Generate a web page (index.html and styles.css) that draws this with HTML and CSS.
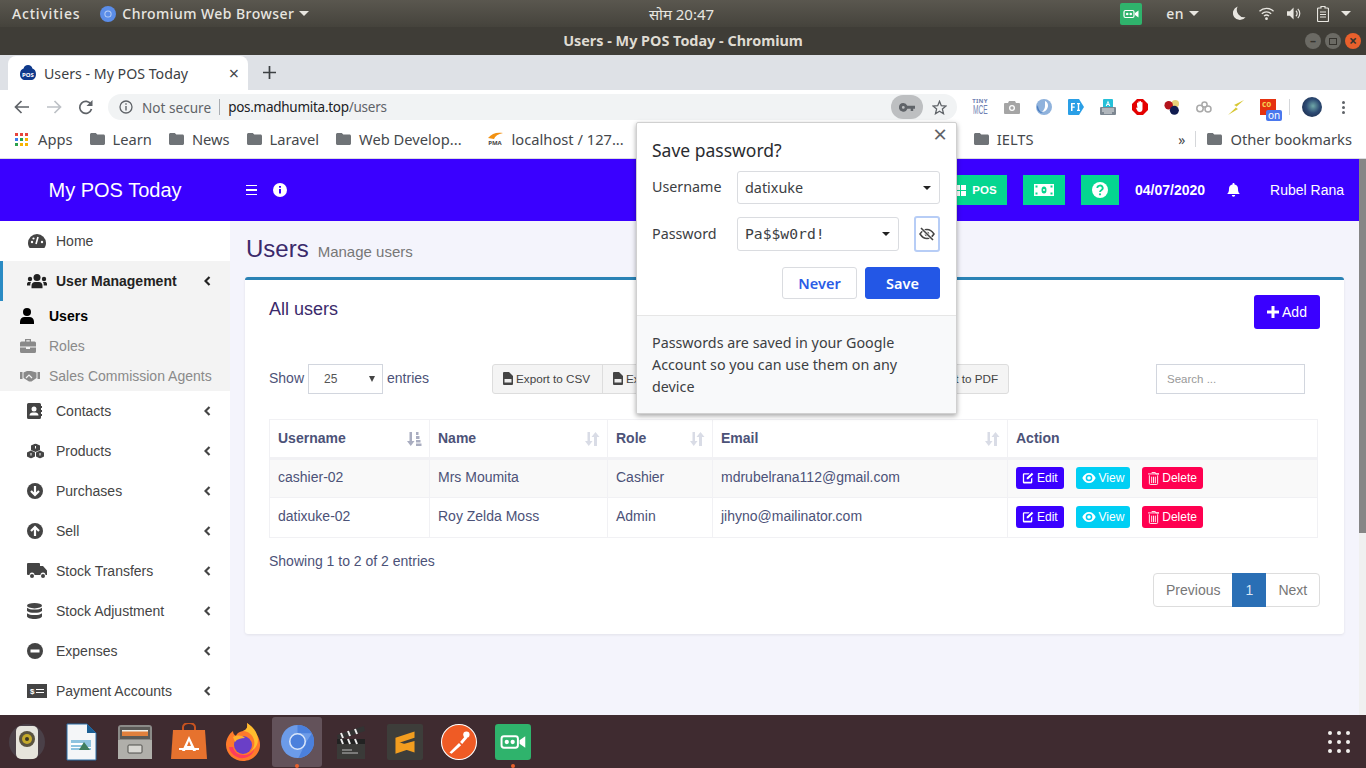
FILE: index.html
```html
<!DOCTYPE html>
<html lang="en">

<head>
    <meta charset="UTF-8">
    <title>Users - My POS Today - Chromium</title>
    <link rel="stylesheet" href="styles.css">
</head>

<body>
    <svg class="defs" width="0" height="0">
        <symbol id="folder" viewBox="0 0 15 12"><path d="M1.5 0h4.3l1.5 1.6h6.2c.8 0 1.5.7 1.5 1.5v7.400c0 .8-.7 1.500-1.500 1.500h-12C.7 12 0 11.300 0 10.500v-9C0 .7.700 0 1.500 0z" fill="#6f7377"/></symbol>
        <symbol id="chev" viewBox="0 0 7 10"><path d="M5.500 1 1.500 5l4 4" fill="none" stroke="currentColor" stroke-width="2.200"/></symbol>
        <symbol id="sort" viewBox="0 0 16 14"><path d="M3.500 0h2.500v9h2.500l-3.750 5L1 9h2.500zM11.500 0l4 5H13v9h-3V5H7.500z" fill="#d9dce6"/></symbol>
        <symbol id="sort-on" viewBox="0 0 16 14"><path d="M3.500 0h2.500v9h2.500l-3.750 5L1 9h2.500z" fill="#a9adc0"/><path d="M10 0h2.500v3H10zM10 4h3.500v3H10zM10 8h4.500v2.500H10zM10 11.500h5.500V14H10z" fill="#a9adc0"/></symbol>
        <symbol id="edit" viewBox="0 0 14 14"><path d="M2 1.500h7L7.500 3H2.500v8.500h8V8L12 6.500V12a1.500 1.500 0 0 1-1.500 1.500h-8A1.500 1.500 0 0 1 1 12V3a1.500 1.500 0 0 1 1-1.500zM11.500.8l1.700 1.700-6 6H5.500V6.800z" fill="#fff"/></symbol>
        <symbol id="eye" viewBox="0 0 16 12"><path d="M8 0c3.500 0 6.500 2.400 8 6-1.500 3.600-4.500 6-8 6S1.500 9.600 0 6c1.500-3.600 4.500-6 8-6zm0 2a4 4 0 1 0 0 8 4 4 0 0 0 0-8zm0 1.800a2.200 2.200 0 1 1 0 4.400 2.200 2.200 0 0 1 0-4.400z" fill="#fff"/></symbol>
        <symbol id="trash" viewBox="0 0 12 14"><path d="M4 .5h4l.6 1.500H12M0 2h12M1.500 3.500v9a1 1 0 0 0 1 1h7a1 1 0 0 0 1-1v-9M4 5v7M6 5v7M8 5v7" fill="none" stroke="#fff"/></symbol>
        <symbol id="file" viewBox="0 0 10 13"><path d="M0 1a1 1 0 0 1 1-1h5l4 4v8a1 1 0 0 1-1 1H1a1 1 0 0 1-1-1z" fill="#444"/><rect x="1.500" y="7" width="7" height="3.500" fill="#eee"/></symbol>
        <symbol id="meet" viewBox="0 0 22 22"><rect width="22" height="22" rx="2" fill="#2fb36c"/><rect x="4" y="7.500" width="10" height="7" rx="1.500" fill="none" stroke="#fff" stroke-width="1.200"/><circle cx="7.200" cy="11" r="1.300" fill="#fff"/><circle cx="10.800" cy="11" r="1.300" fill="#fff"/><path d="M15 10l3.500-2.500v7L15 12z" fill="#fff"/></symbol>
    </svg>

    <!-- gnome top bar -->
    <div class="topbar">
        <div class="topbar-left">
            <span class="activities">Activities</span>
            <svg class="top-chromium" width="16" height="16" viewBox="0 0 16 16"><circle cx="8" cy="8" r="8" fill="#5b8de8"/><circle cx="8" cy="8" r="3.600" fill="#b9cff5"/><circle cx="8" cy="8" r="2.600" fill="#5b8de8"/></svg>
            <span class="appname">Chromium Web Browser</span>
            <span class="caret"></span>
        </div>
        <div class="clock">सोम 20:47</div>
        <div class="topbar-right">
            <svg class="meet" width="22" height="22"><use href="#meet"/></svg>
            <span class="lang">en</span>
            <span class="caret"></span>
            <svg class="tray tray-moon" width="13" height="15" viewBox="0 0 14 15"><path d="M5 0a7.500 7.500 0 1 0 8.500 11.500A8 8 0 0 1 5 0z" fill="#e8e6e0"/></svg>
            <svg class="tray tray-wifi" width="15" height="15" viewBox="0 0 16 15"><path d="M.5 5a11 11 0 0 1 15 0M3 7.800a7.400 7.400 0 0 1 10 0M5.300 10.300a4 4 0 0 1 5.400 0" fill="none" stroke="#e8e6e0" stroke-width="1.400"/><circle cx="8" cy="13" r="1.500" fill="#e8e6e0"/></svg>
            <svg class="tray tray-vol" width="15" height="15" viewBox="0 0 16 15"><path d="M0 5h3l4-4v13l-4-4H0z" fill="#e8e6e0"/><path d="M9.500 4.500a4 4 0 0 1 0 6M11.500 2.500a7 7 0 0 1 0 10" fill="none" stroke="#e8e6e0" stroke-width="1.300"/></svg>
            <svg class="tray tray-batt" width="12" height="16" viewBox="0 0 12 16"><path d="M4 .5h4v1.500h2.500a1 1 0 0 1 1 1v11.500a1 1 0 0 1-1 1h-9a1 1 0 0 1-1-1V3a1 1 0 0 1 1-1H4z" fill="none" stroke="#e8e6e0" stroke-width="1.200"/><path d="M3 6h6M3 8.500h6M3 11h6" stroke="#e8e6e0" stroke-width="1.200"/></svg>
            <span class="caret"></span>
        </div>
    </div>

    <!-- window title -->
    <div class="titlebar">
        <span class="title-text">Users - My POS Today - Chromium</span>
        <div class="winbtns">
            <span class="winbtn">&#8211;</span>
            <span class="winbtn"><i class="winbtn-box"></i></span>
            <span class="winbtn winbtn-close">&#215;</span>
        </div>
    </div>

    <!-- tabs -->
    <div class="tabstrip">
        <div class="tab">
            <svg width="16" height="16" viewBox="0 0 16 16"><path d="M8 0c2.400 0 4 1.500 4.400 3.500C14.500 4 16 6 16 9c0 4-2.500 6-5 6H5c-2.500 0-5-2-5-6 0-3 1.500-5 3.600-5.500C4 1.500 5.600 0 8 0z" fill="#0f3a8c"/><text x="8" y="12" class="fav-text">POS</text></svg>
            <span class="tab-title">Users - My POS Today</span>
            <span class="tab-close">&#215;</span>
        </div>
        <svg class="newtab" width="13" height="13" viewBox="0 0 13 13"><path d="M6.500 0v13M0 6.500h13" stroke="#3c4043" stroke-width="1.700"/></svg>
    </div>

    <!-- toolbar -->
    <div class="toolbar">
        <svg class="nav-ico" width="16" height="14" viewBox="0 0 16 14"><path d="M15 7H2M7.500 1 1.500 7l6 6" fill="none" stroke="#5f6368" stroke-width="1.700"/></svg>
        <svg class="nav-ico" width="16" height="14" viewBox="0 0 16 14"><path d="M1 7h13M8.500 1l6 6-6 6" fill="none" stroke="#bdc1c6" stroke-width="1.700"/></svg>
        <svg class="nav-ico" width="15" height="15" viewBox="0 0 15 15"><path d="M13 4.500A6 6 0 1 0 13.500 9" fill="none" stroke="#5f6368" stroke-width="1.700"/><path d="M14.500 0v6h-6z" fill="#5f6368"/></svg>
        <div class="omnibox">
            <svg class="omni-info" width="14" height="14" viewBox="0 0 14 14"><circle cx="7" cy="7" r="6" fill="none" stroke="#5f6368" stroke-width="1.300"/><path d="M7 6v4.500M7 3.300v1.500" stroke="#5f6368" stroke-width="1.400"/></svg>
            <span class="not-secure">Not secure</span>
            <span class="omni-sep"></span>
            <span class="url">pos.madhumita.top<span class="url-path">/users</span></span>
            <span class="key-pill">
                <svg width="16" height="9" viewBox="0 0 16 9"><path d="M4.300 0a4.300 4.300 0 0 1 4 2.700H16v3h-1.800V8h-2.500V5.700H8.300A4.300 4.300 0 1 1 4.300 0zm0 3a1.400 1.400 0 1 0 0 2.800 1.400 1.400 0 0 0 0-2.800z" fill="#5f6368"/></svg>
            </span>
            <svg class="omni-star" width="15" height="15" viewBox="0 0 15 15"><path d="M7.500 1.300 9.300 5.700l4.700.4-3.600 3 1.100 4.600-4-2.500-4 2.500 1.100-4.600L1 6.100l4.700-.4z" fill="none" stroke="#5f6368" stroke-width="1.300"/></svg>
        </div>
        <div class="extensions">
            <span class="ext ext-tiny"><b>TINY</b><i>MCE</i></span>
            <svg class="ext" width="16" height="14" viewBox="0 0 16 14"><path d="M5 1h6l1 2h3a1 1 0 0 1 1 1v9a1 1 0 0 1-1 1H1a1 1 0 0 1-1-1V4a1 1 0 0 1 1-1h3z" fill="#a5a5a5"/><circle cx="8" cy="8" r="3" fill="#fff"/><circle cx="8" cy="8" r="1.700" fill="#a5a5a5"/></svg>
            <svg class="ext" width="16" height="16" viewBox="0 0 16 16"><circle cx="8" cy="8" r="8" fill="#8fb2dc"/><path d="M9 2c3 1 4 5 2 8-1 2-3 3-5 3 2-2 3-4 3-6z" fill="#fff"/><path d="M2 6c0 4 2 7 5 8-3 0-6-2-6-6z" fill="#4a7cc0"/></svg>
            <svg class="ext" width="16" height="16" viewBox="0 0 16 16"><path d="M1 0h10l5 8-5 8H1a1 1 0 0 1-1-1V1a1 1 0 0 1 1-1z" fill="#2a9fe6"/><path d="M3 4h4v1.300H4.500v2.200H6.700v1.300H4.500V12H3zM9 4h3v1.200h-.8v5.600h.8V12H9v-1.200h.8V5.200H9z" fill="#fff"/></svg>
            <svg class="ext" width="16" height="16" viewBox="0 0 16 16"><rect x="3" width="10" height="9" rx="1" fill="#25c0d8"/><path d="M8 1.500 10.300 7H9.200l-.4-1H7.200l-.4 1H5.700zM8 3.500l-.5 1.500h1z" fill="#fff"/><rect y="8" width="16" height="8" rx="1" fill="#7d8791"/><path d="M2 10h12M2 12h12M4 14h8" stroke="#fff" stroke-width=".8"/></svg>
            <svg class="ext" width="16" height="16" viewBox="0 0 16 16"><path d="M5 0h6l5 5v6l-5 5H5l-5-5V5z" fill="#e40000"/><path d="M5 6V4a.7.700 0 0 1 1.300 0V3a.7.700 0 0 1 1.400 0v-.2a.7.700 0 0 1 1.400 0V3.800a.7.700 0 0 1 1.400 0V10c0 2-1 3-2.800 3S5.500 12 4 9l.8-.6L5.500 9z" fill="#fff"/></svg>
            <svg class="ext" width="17" height="17" viewBox="0 0 17 17"><circle cx="12" cy="4.500" r="4" fill="#e8d27a"/><circle cx="5" cy="6" r="4.500" fill="#b3141c"/><circle cx="11" cy="11.500" r="4.800" fill="#101c50"/></svg>
            <svg class="ext" width="16" height="12" viewBox="0 0 16 12"><circle cx="4" cy="7.500" r="3.200" fill="none" stroke="#a9a9a9" stroke-width="1.500"/><circle cx="8.500" cy="3.500" r="2.600" fill="none" stroke="#a9a9a9" stroke-width="1.500"/><circle cx="12" cy="8" r="3" fill="none" stroke="#a9a9a9" stroke-width="1.500"/></svg>
            <svg class="ext" width="16" height="15" viewBox="0 0 16 15"><path d="M16 0 6 5l3 1.500L0 15l10-6-2.500-1.500z" fill="#d7c733"/></svg>
            <span class="ext ext-com"><b class="ext-com-text">co</b><span class="ext-on">on</span></span>
            <span class="ext-sep"></span>
            <span class="avatar"></span>
            <span class="menu-dots"><i></i><i></i><i></i></span>
        </div>
    </div>

    <!-- bookmarks -->
    <div class="bookmarks">
        <span class="bm">
            <span class="apps-grid">
                <i class="c-r"></i><i class="c-r"></i><i class="c-r"></i>
                <i class="c-b"></i><i class="c-g"></i><i class="c-y"></i>
                <i class="c-g"></i><i class="c-y"></i><i class="c-y"></i>
            </span>
            Apps
        </span>
        <span class="bm"><svg width="15" height="12"><use href="#folder"/></svg>Learn</span>
        <span class="bm"><svg width="15" height="12"><use href="#folder"/></svg>News</span>
        <span class="bm"><svg width="15" height="12"><use href="#folder"/></svg>Laravel</span>
        <span class="bm"><svg width="15" height="12"><use href="#folder"/></svg>Web Develop...</span>
        <span class="bm bm-pma">
            <svg width="17" height="14" viewBox="0 0 17 14"><path d="M1 6c4-5 9-6 15-5-5 1-8 3-9 6z" fill="#f29111"/><text x="8" y="13" class="pma-text">PMA</text></svg>
            localhost / 127...
        </span>
        <span class="bm bm-push"><svg width="15" height="12"><use href="#folder"/></svg>IELTS</span>
        <span class="bm-more">&raquo;</span>
        <span class="bm-sep"></span>
        <span class="bm"><svg width="15" height="12"><use href="#folder"/></svg>Other bookmarks</span>
    </div>

    <!-- the page inside the browser -->
    <div class="viewport">
        <div class="app">
            <header class="navbar">
                <div class="brand">My POS Today</div>
                <span class="burger"><i></i><i></i><i></i></span>
                <svg class="nav-info" width="14" height="14" viewBox="0 0 14 14"><circle cx="7" cy="7" r="7" fill="#fff"/><path d="M7 6v4.500M7 3v1.800" stroke="#3a00ff" stroke-width="2"/></svg>
                <div class="nav-right">
                    <span class="nav-btn nav-pos"><svg width="11" height="11" viewBox="0 0 11 11"><path d="M0 0h5v5H0zM6 0h5v5H6zM0 6h5v5H0zM6 6h5v5H6z" fill="#fff"/></svg>POS</span>
                    <span class="nav-btn nav-money"><svg width="20" height="12" viewBox="0 0 20 12"><rect width="20" height="12" fill="#fff"/><ellipse cx="10" cy="6" rx="2.500" ry="3.500" fill="#05d690"/><circle cx="10" cy="6" r="1" fill="#fff"/><path d="M1.500 1.500h2v2h-2zM16.500 1.500h2v2h-2zM1.500 8.500h2v2h-2zM16.500 8.500h2v2h-2z" fill="#05d690"/></svg></span>
                    <span class="nav-btn nav-help"><svg width="16" height="16" viewBox="0 0 16 16"><circle cx="8" cy="8" r="8" fill="#fff"/><path d="M5.300 6a2.700 2.500 0 1 1 4 2.200C8.400 8.800 8 9.200 8 10" fill="none" stroke="#05d690" stroke-width="1.800"/><circle cx="8" cy="12.300" r="1.100" fill="#05d690"/></svg></span>
                    <span class="nav-date">04/07/2020</span>
                    <svg class="nav-bell" width="13" height="14" viewBox="0 0 13 14"><path d="M6.500 0c.6 0 1 .4 1 1v.500A4.300 4.300 0 0 1 11 5.800c0 3 .6 4.200 2 5.200H0c1.400-1 2-2.200 2-5.200a4.300 4.300 0 0 1 3.500-4.300V1c0-.6.400-1 1-1zM4.800 12h3.400a1.700 1.700 0 0 1-3.400 0z" fill="#fff"/></svg>
                    <span class="nav-user">Rubel Rana</span>
                </div>
            </header>
            <div class="app-body">
                <aside class="sidebar">
                    <div class="side-item">
                        <svg class="side-ico" width="20" height="16" viewBox="0 0 20 16"><path d="M10 1a9 9 0 0 1 9 9c0 2-.7 3.800-1.600 5H2.600C1.700 13.800 1 12 1 10a9 9 0 0 1 9-9z" fill="#444"/><path d="M11 4 9 11" stroke="#fff" stroke-width="1.600"/><circle cx="5" cy="9" r="1.200" fill="#fff"/><circle cx="15" cy="9" r="1.200" fill="#fff"/><circle cx="6.500" cy="5.500" r="1.100" fill="#fff"/></svg>
                        <span>Home</span>
                    </div>
                    <div class="side-group">
                        <div class="side-item side-active">
                            <svg class="side-ico" width="20" height="15" viewBox="0 0 20 15"><circle cx="10" cy="4" r="3.500" fill="#222"/><path d="M4.500 15v-2.500C4.500 10 6 8.500 8 8.500h4c2 0 3.500 1.500 3.500 4V15z" fill="#222"/><circle cx="3" cy="5.500" r="2.200" fill="#222"/><circle cx="17" cy="5.500" r="2.200" fill="#222"/><path d="M0 12v-1.500C0 9 1 8.500 2 8.500h2A5 5 0 0 0 3.300 12zM20 12v-1.500c0-1.500-1-2-2-2h-2a5 5 0 0 1 .7 3.500z" fill="#222"/></svg>
                            <span>User Management</span>
                            <svg class="side-chev" width="7" height="10"><use href="#chev"/></svg>
                        </div>
                        <div class="side-sub side-sub-on">
                            <svg class="sub-ico" width="14" height="16" viewBox="0 0 14 16"><circle cx="7" cy="4" r="4" fill="#000"/><path d="M0 16v-2.500C0 11 2 9 4.500 9h5C12 9 14 11 14 13.500V16z" fill="#000"/></svg>
                            <span>Users</span>
                        </div>
                        <div class="side-sub">
                            <svg class="sub-ico" width="16" height="14" viewBox="0 0 16 14"><path d="M5 0h6v2.500h3.500A1.500 1.500 0 0 1 16 4v3.500H0V4a1.500 1.500 0 0 1 1.500-1.500H5zm1.300 1.300v1.200h3.400V1.300zM0 8.500h6V10h4V8.500h6v4A1.500 1.500 0 0 1 14.500 14h-13A1.500 1.500 0 0 1 0 12.500z" fill="#8a8a8a"/></svg>
                            <span>Roles</span>
                        </div>
                        <div class="side-sub">
                            <svg class="sub-ico" width="20" height="12" viewBox="0 0 20 12"><path d="M0 2h2.500v7H0zM17.500 2H20v7h-2.500zM3.500 2.500 7 1h4l5.500 1.500V8l-5 3.500H9L3.500 8z" fill="#8a8a8a"/><path d="M6 8l3-3 3 3" fill="none" stroke="#f3f3f3" stroke-width="1.200"/></svg>
                            <span>Sales Commission Agents</span>
                        </div>
                    </div>
                    <div class="side-item">
                        <svg class="side-ico" width="15" height="16" viewBox="0 0 15 16"><path d="M1.500 0h11A1.500 1.500 0 0 1 14 1.500V3h1v2h-1v2h1v2h-1v2h1v2h-1v1.500a1.500 1.500 0 0 1-1.500 1.500h-11A1.500 1.500 0 0 1 0 14.500v-13A1.500 1.500 0 0 1 1.500 0z" fill="#444"/><circle cx="7" cy="6" r="2.500" fill="#fff"/><path d="M2.500 12.500c0-2 1.500-3 3-3h3c1.500 0 3 1 3 3z" fill="#fff"/></svg>
                        <span>Contacts</span>
                        <svg class="side-chev" width="7" height="10"><use href="#chev"/></svg>
                    </div>
                    <div class="side-item">
                        <svg class="side-ico" width="17" height="15" viewBox="0 0 17 15"><path d="M8.500 0 13 2v4.500L8.500 8.500 4 6.500V2zM4 7l4 2v4l-4 2-4-2V9zM13 7l4 2v4l-4 2-4-2V9z" fill="#444"/><path d="M8.500 2.500V5M4 9.500V12M13 9.500V12" stroke="#fff"/></svg>
                        <span>Products</span>
                        <svg class="side-chev" width="7" height="10"><use href="#chev"/></svg>
                    </div>
                    <div class="side-item">
                        <svg class="side-ico" width="16" height="16" viewBox="0 0 16 16"><circle cx="8" cy="8" r="8" fill="#444"/><path d="M8 3v8M4 8l4 4 4-4" fill="none" stroke="#fff" stroke-width="2.200"/></svg>
                        <span>Purchases</span>
                        <svg class="side-chev" width="7" height="10"><use href="#chev"/></svg>
                    </div>
                    <div class="side-item">
                        <svg class="side-ico" width="16" height="16" viewBox="0 0 16 16"><circle cx="8" cy="8" r="8" fill="#444"/><path d="M8 13V5M4 8l4-4 4 4" fill="none" stroke="#fff" stroke-width="2.200"/></svg>
                        <span>Sell</span>
                        <svg class="side-chev" width="7" height="10"><use href="#chev"/></svg>
                    </div>
                    <div class="side-item">
                        <svg class="side-ico" width="20" height="16" viewBox="0 0 20 16"><path d="M1 0h11a1 1 0 0 1 1 1v2h3l4 4.500V12h-1.500a2.500 2.500 0 0 0-5 0H7.500a2.500 2.500 0 0 0-5 0H1a1 1 0 0 1-1-1V1a1 1 0 0 1 1-1z" fill="#444"/><circle cx="5" cy="13" r="2" fill="#444"/><circle cx="16" cy="13" r="2" fill="#444"/></svg>
                        <span>Stock Transfers</span>
                        <svg class="side-chev" width="7" height="10"><use href="#chev"/></svg>
                    </div>
                    <div class="side-item">
                        <svg class="side-ico" width="15" height="16" viewBox="0 0 15 16"><ellipse cx="7.500" cy="2.700" rx="7.500" ry="2.700" fill="#444"/><path d="M0 4.700c1.500 1.400 4 1.800 7.500 1.800S13.500 6.100 15 4.700V8c-1.500 1.300-4 1.800-7.500 1.800S1.500 9.300 0 8zM0 10.200c1.500 1.300 4 1.800 7.500 1.800s6-.5 7.500-1.800v3.100c0 1.500-3.400 2.700-7.500 2.700S0 14.800 0 13.300z" fill="#444"/></svg>
                        <span>Stock Adjustment</span>
                        <svg class="side-chev" width="7" height="10"><use href="#chev"/></svg>
                    </div>
                    <div class="side-item">
                        <svg class="side-ico" width="16" height="16" viewBox="0 0 16 16"><circle cx="8" cy="8" r="8" fill="#444"/><rect x="3.500" y="6.500" width="9" height="3" fill="#fff"/></svg>
                        <span>Expenses</span>
                        <svg class="side-chev" width="7" height="10"><use href="#chev"/></svg>
                    </div>
                    <div class="side-item">
                        <svg class="side-ico" width="20" height="14" viewBox="0 0 20 14"><rect width="20" height="14" fill="#444"/><path d="M9 5.500h8M9 8.500h8" stroke="#fff" stroke-width="1.200"/><text x="3" y="10" class="dollar">$</text></svg>
                        <span>Payment Accounts</span>
                        <svg class="side-chev" width="7" height="10"><use href="#chev"/></svg>
                    </div>
                </aside>
                <main class="content">
                    <div class="content-head">
                        <h1>Users</h1>
                        <small>Manage users</small>
                    </div>
                    <section class="card">
                        <div class="card-top">
                            <h3>All users</h3>
                            <span class="btn-add"><svg width="12" height="12" viewBox="0 0 12 12"><path d="M6 0v12M0 6h12" stroke="#fff" stroke-width="3"/></svg>Add</span>
                        </div>
                        <div class="controls">
                            <span class="show">Show</span>
                            <span class="page-size">25<i></i></span>
                            <span class="show">entries</span>
                            <div class="exports">
                                <span class="exp exp-csv"><svg width="10" height="13"><use href="#file"/></svg>Export to CSV</span>
                                <span class="exp exp-xls"><svg width="10" height="13"><use href="#file"/></svg>Export to Excel</span>
                                <span class="exp exp-pdf">Export to PDF</span>
                            </div>
                            <input class="search" type="text" placeholder="Search ...">
                        </div>
                        <table class="users">
                            <thead>
                                <tr>
                                    <th class="col-user">Username<svg width="16" height="14"><use href="#sort-on"/></svg></th>
                                    <th class="col-name">Name<svg width="16" height="14"><use href="#sort"/></svg></th>
                                    <th class="col-role">Role<svg width="16" height="14"><use href="#sort"/></svg></th>
                                    <th class="col-mail">Email<svg width="16" height="14"><use href="#sort"/></svg></th>
                                    <th>Action</th>
                                </tr>
                            </thead>
                            <tbody>
                                <tr class="odd">
                                    <td>cashier-02</td>
                                    <td>Mrs Moumita</td>
                                    <td>Cashier</td>
                                    <td>mdrubelrana112@gmail.com</td>
                                    <td class="actions">
                                        <span class="act act-edit"><svg width="12" height="12"><use href="#edit"/></svg>Edit</span>
                                        <span class="act act-view"><svg width="14" height="10"><use href="#eye"/></svg>View</span>
                                        <span class="act act-del"><svg width="11" height="13"><use href="#trash"/></svg>Delete</span>
                                    </td>
                                </tr>
                                <tr>
                                    <td>datixuke-02</td>
                                    <td>Roy Zelda Moss</td>
                                    <td>Admin</td>
                                    <td>jihyno@mailinator.com</td>
                                    <td class="actions">
                                        <span class="act act-edit"><svg width="12" height="12"><use href="#edit"/></svg>Edit</span>
                                        <span class="act act-view"><svg width="14" height="10"><use href="#eye"/></svg>View</span>
                                        <span class="act act-del"><svg width="11" height="13"><use href="#trash"/></svg>Delete</span>
                                    </td>
                                </tr>
                            </tbody>
                        </table>
                        <div class="info">Showing 1 to 2 of 2 entries</div>
                        <div class="pager">
                            <span class="pg">Previous</span>
                            <span class="pg pg-on">1</span>
                            <span class="pg">Next</span>
                        </div>
                    </section>
                </main>
            </div>
        </div>
        <div class="scrollbar"><div class="thumb"></div></div>
    </div>

    <!-- ubuntu dock -->
    <div class="dock">
        <span class="dock-item">
            <svg width="38" height="38" viewBox="0 0 38 38"><circle cx="19" cy="19" r="18" fill="#4a4048"/><rect x="8" y="3" width="22" height="33" rx="5" fill="#e6e4dc"/><circle cx="19" cy="16" r="8" fill="#5a5340"/><circle cx="19" cy="16" r="5" fill="#c4a92b"/><circle cx="19" cy="16" r="2" fill="#3c3626"/></svg>
        </span>
        <span class="dock-item">
            <svg width="32" height="38" viewBox="0 0 32 38"><path d="M2 1h20l9 9v27H2z" fill="#f4f6f8" stroke="#2a6ea6"/><path d="M22 1l9 9h-9z" fill="#1c5f94"/><rect x="6" y="17" width="20" height="10" fill="#8fc3df"/><path d="M6 20h12v2H6zM6 24h20v1H6z" fill="#fff"/><path d="M14 27l5-8 6 8z" fill="#3f7d5e"/></svg>
        </span>
        <span class="dock-item">
            <svg width="36" height="38" viewBox="0 0 36 38"><rect x="1" y="2" width="34" height="34" rx="3" fill="#8b8b88"/><rect x="3" y="4" width="30" height="12" fill="#5b5a57"/><rect x="5" y="8" width="26" height="5" fill="#e0803d"/><rect x="5" y="7" width="26" height="1.500" fill="#f1f0ea"/><rect x="1" y="17" width="34" height="19" fill="#b0afaa"/><rect x="11" y="22" width="14" height="8" rx="1" fill="#d9d8d3" stroke="#4f4e4b"/></svg>
        </span>
        <span class="dock-item">
            <svg width="36" height="38" viewBox="0 0 36 38"><path d="M12 8V4a6 4 0 0 1 12 0v4" fill="none" stroke="#c9531f" stroke-width="2"/><path d="M2 7h32l2 29H0z" fill="#e6722e"/><path d="M18 13l7 15h-3l-1-3h-6l-1 3h-3zM18 18l-2 5h4z" fill="#fff"/><rect x="8" y="25" width="20" height="2" fill="#fff"/></svg>
        </span>
        <span class="dock-item">
            <svg width="36" height="38" viewBox="0 0 36 38"><path d="M1 22C1 31 9 38 18 38c9 0 17-7 17-16 0-4-1-7-3-10-.5 2-1.500 3-2.500 4C29 9 26 3 22 0c1 5-1 7-4 8-4 1-6 2-7 5-2-1-3-3-3-5C4 11 1 16 1 22z" fill="#ff7a2b"/><path d="M22 0c1 5-1 7-4 8 5 0 10 4 11 9 1 4 0 8-3 11 4-2 7-6 7-11C33 9 27 3 22 0z" fill="#ffbd2e"/><circle cx="18" cy="22" r="9" fill="#6a3fc7"/><path d="M4 24c1 7 8 12 15 11 6-1 10-5 10-9-2 4-6 6-10 6-6 0-10-3-11-8z" fill="#ff3d5c"/><path d="M8 14c4-2 9-2 12 1-4 0-8 1-10 4z" fill="#ffb02e"/></svg>
        </span>
        <span class="dock-item dock-active">
            <svg width="33" height="33" viewBox="0 0 32 32"><circle cx="16" cy="16" r="16" fill="#6c9be8"/><path d="M16 0a16 16 0 0 1 14 8H16zM30 8a16 16 0 0 1-13 24l6-13z" fill="#4b80dc"/><circle cx="16" cy="16" r="7.500" fill="#4b80dc" stroke="#d8e5fa" stroke-width="1.500"/></svg>
            <i class="dock-dot"></i>
        </span>
        <span class="dock-item">
            <svg width="30" height="36" viewBox="0 0 30 36"><path d="M1 11 28 2l1 5L2 16z" fill="#333"/><path d="M5 9l2 5M12 7l2 5M19 5l2 5" stroke="#eee" stroke-width="2"/><rect x="1" y="15" width="28" height="20" fill="#3a3a38"/><rect x="1" y="15" width="28" height="5" fill="#222"/><path d="M5 15l2 5M12 15l2 5M19 15l2 5" stroke="#eee" stroke-width="2"/><path d="M6 26h10M6 29h16" stroke="#bbb"/></svg>
        </span>
        <span class="dock-item">
            <svg width="36" height="36" viewBox="0 0 34 34"><rect width="34" height="34" rx="2" fill="#3d3d3a"/><path d="M8 13 26 7v6L8 19zM8 16l18 6v5L8 21zM8 21l18-5v6L8 28z" fill="#f29d1f"/></svg>
        </span>
        <span class="dock-item">
            <svg width="36" height="36" viewBox="0 0 34 34"><circle cx="17" cy="17" r="16.500" fill="#ef5b25" stroke="#fff"/><path d="M8 27l9-9 2 2-9 8zM18 17l5-6 2 2-5 6z" fill="#fff"/><circle cx="24" cy="10" r="3" fill="#fff"/></svg>
        </span>
        <span class="dock-item">
            <svg width="36" height="36"><use href="#meet"/></svg>
            <i class="dock-dot"></i>
        </span>
        <span class="dock-grid">
            <i></i><i></i><i></i><i></i><i></i><i></i><i></i><i></i><i></i>
        </span>
    </div>

    <!-- save password bubble -->
    <div class="pw-bubble">
        <span class="pw-close">&#215;</span>
        <div class="pw-main">
            <div class="pw-title">Save password?</div>
            <div class="pw-row">
                <label>Username</label>
                <div class="pw-field">datixuke<i></i></div>
            </div>
            <div class="pw-row pw-row-pass">
                <label>Password</label>
                <div class="pw-field pw-mono">Pa$$w0rd!<i></i></div>
                <span class="pw-eye">
                    <svg width="16" height="14" viewBox="0 0 16 14"><path d="M1 7c2-3 4.500-4.500 7-4.500S13 4 15 7c-2 3-4.500 4.500-7 4.500S3 10 1 7z" fill="none" stroke="#444" stroke-width="1.500"/><circle cx="8" cy="7" r="2.300" fill="#444"/><path d="M2 1l12 12" stroke="#fff" stroke-width="3"/><path d="M2 1l12 12" stroke="#444" stroke-width="1.600"/></svg>
                </span>
            </div>
            <div class="pw-actions">
                <span class="pw-btn">Never</span>
                <span class="pw-btn pw-save">Save</span>
            </div>
        </div>
        <div class="pw-foot">Passwords are saved in your Google Account so you can use them on any device</div>
    </div>
</body>
</html>
```

FILE: styles.css
```css
/* general */
* {
    box-sizing: border-box;
}

html,
body {
    margin: 0;
    height: 768px;
    overflow: hidden;
}

body {
    position: relative;
    display: flex;
    flex-direction: column;
    font-family: "Liberation Sans", Arial, sans-serif;
    background-color: #fff;
}

.defs {
    position: absolute;
}

/* gnome bar */
.topbar {
    flex: 0 0 27px;
    display: grid;
    grid-template-columns: 1fr auto 1fr;
    align-items: center;
    padding: 0 15px 0 12px;
    background: linear-gradient(#5a574f, #45433c);
    color: #e8e6e0;
    font-family: "Noto Sans", sans-serif;
    font-size: 14px;
}

.topbar-left {
    display: flex;
    align-items: center;
}

.activities {
    font-weight: 500;
    letter-spacing: .8px;
}

.top-chromium {
    margin-left: 20px;
    margin-right: 6px;
}

.appname {
    font-weight: 500;
    letter-spacing: .45px;
}

.caret {
    width: 0;
    height: 0;
    margin-left: 5px;
    border-left: 5px solid transparent;
    border-right: 5px solid transparent;
    border-top: 5px solid #e8e6e0;
}

.clock {
    font-size: 15px;
}

.topbar-right {
    display: flex;
    align-items: center;
    justify-content: flex-end;
}

.meet {
    margin-right: 24px;
}

.lang {
    font-weight: 500;
    letter-spacing: .5px;
}

.tray-moon {
    margin-left: 34px;
}

.tray-wifi {
    margin-left: 13px;
}

.tray-vol {
    margin-left: 13px;
}

.tray-batt {
    margin-left: 15px;
}

.tray-batt + .caret {
    margin-left: 12px;
}

/* window title */
.titlebar {
    flex: 0 0 28px;
    position: relative;
    display: flex;
    align-items: center;
    justify-content: center;
    padding-bottom: 2px;
    background: #3f3d37;
    color: #dfdbd2;
    font-family: "Noto Sans", sans-serif;
    font-size: 14.400px;
    font-weight: 700;
}

.winbtns {
    position: absolute;
    right: 5px;
    top: 6px;
    display: flex;
    gap: 4px;
}

.winbtn {
    width: 16px;
    height: 16px;
    border-radius: 50%;
    background: #6b6a64;
    color: #35332e;
    display: flex;
    align-items: center;
    justify-content: center;
    font-size: 12px;
    line-height: 1;
}

.winbtn-box {
    width: 8px;
    height: 7px;
    border: 1px solid #35332e;
}

.winbtn-close {
    background: #e9602c;
    font-size: 14px;
}

/* tabs */
.tabstrip {
    flex: 0 0 35px;
    display: flex;
    align-items: flex-end;
    padding-left: 8px;
    background: #dee1e6;
}

.tab {
    width: 240px;
    height: 34px;
    display: flex;
    align-items: center;
    padding: 0 4px 0 12px;
    background: #fff;
    border-radius: 8px 8px 0 0;
    color: #3c4043;
    font-family: "Noto Sans", sans-serif;
    font-size: 14.200px;
}

.fav-text {
    fill: #fff;
    font-size: 6px;
    font-weight: 700;
    text-anchor: middle;
}

.tab-title {
    margin-left: 8px;
    flex: 1;
}

.tab-close {
    width: 20px;
    font-size: 18px;
    text-align: center;
    color: #45484c;
}

.newtab {
    margin: 0 0 11px 15px;
}

/* toolbar */
.toolbar {
    flex: 0 0 34px;
    display: flex;
    align-items: center;
    padding-left: 14px;
    background: #fff;
    font-family: "Noto Sans", sans-serif;
}

.nav-ico {
    margin-right: 16px;
}

.omnibox {
    width: 849px;
    height: 26px;
    margin-left: -1px;
    display: flex;
    align-items: center;
    padding: 0 10px 0 11px;
    background: #f1f3f4;
    border-radius: 13px;
    font-size: 14px;
}

.not-secure {
    margin-left: 9px;
    font-size: 13.600px;
    color: #5f6368;
}

.omni-sep {
    width: 1px;
    height: 16px;
    margin: 0 8px;
    background: #a9adb2;
}

.url {
    flex: 1;
    color: #202124;
    font-size: 13.500px;
    letter-spacing: -.27px;
}

.url-path {
    color: #5f6368;
}

.key-pill {
    width: 32px;
    height: 24px;
    margin-right: 9px;
    display: flex;
    align-items: center;
    justify-content: center;
    background: #bdbfc1;
    border-radius: 12px;
}

.extensions {
    flex: 1;
    display: flex;
    align-items: center;
    padding-left: 15px;
}

.ext {
    width: 16px;
    margin-right: 16px;
    flex: 0 0 auto;
}

.ext-tiny {
    display: flex;
    flex-direction: column;
    align-items: center;
    color: #6f7fb3;
    line-height: 1;
}

.ext-tiny b {
    font-size: 6px;
    letter-spacing: .3px;
}

.ext-tiny i {
    display: block;
    font-size: 12px;
    font-style: normal;
    font-family: "Liberation Sans", sans-serif;
    transform: scaleX(.55);
}

.ext-com {
    position: relative;
    height: 16px;
    background: #e53210;
    margin-right: 10px;
}

.ext-com-text {
    display: block;
    color: #f5d050;
    font-size: 8px;
    line-height: 9px;
    padding-left: 2px;
}

.ext-on {
    position: absolute;
    left: 6px;
    top: 11px;
    width: 16px;
    height: 11px;
    background: #4a78ee;
    border-radius: 2px;
    color: #fff;
    font-size: 10px;
    line-height: 11px;
    text-align: center;
}

.ext-sep {
    width: 1px;
    height: 16px;
    margin-left: 3px;
    margin-right: 12px;
    background: #d5d7da;
}

.avatar {
    width: 20px;
    height: 20px;
    border-radius: 50%;
    background: radial-gradient(circle at 55% 45%, #6fa8a8 0, #2c4a73 45%, #16203c 100%);
}

.menu-dots {
    margin-left: 20px;
    display: flex;
    flex-direction: column;
    gap: 2px;
}

.menu-dots i {
    width: 3px;
    height: 3px;
    border-radius: 50%;
    background: #5f6368;
}

/* bookmarks */
.bookmarks {
    flex: 0 0 35px;
    display: flex;
    align-items: center;
    gap: 17px;
    padding: 0 14px 4px 15px;
    background: #fff;
    border-bottom: 1px solid #dadce0;
    color: #45484c;
    font-family: "Noto Sans", sans-serif;
    font-size: 14.700px;
}

.bm {
    display: flex;
    align-items: center;
    gap: 8px;
}

.bm-pma {
    margin-left: 8px;
}

.pma-text {
    font-size: 6px;
    font-weight: 700;
    fill: #444;
    text-anchor: middle;
}

.bm-push {
    margin-left: 333px;
}

.bm-more {
    margin-left: auto;
    font-size: 14px;
    margin-right: -7px;
}

.bm-sep {
    width: 1px;
    height: 16px;
    background: #d5d7da;
    margin-right: -6px;
}

.apps-grid {
    width: 13px;
    height: 13px;
    display: grid;
    grid-template-columns: repeat(3, 3px);
    gap: 2px;
    margin-right: 2px;
}

.apps-grid i {
    display: block;
    height: 3px;
}

.c-r { background: #e8453c; }
.c-b { background: #3b7ded; }
.c-g { background: #2ba24c; }
.c-y { background: #f7b300; }

/* page */
.viewport {
    flex: 1;
    display: flex;
    min-height: 0;
}

.app {
    flex: 1;
    display: flex;
    flex-direction: column;
    min-width: 0;
}

.scrollbar {
    flex: 0 0 7px;
    background: #f0f0f0;
}

.thumb {
    height: 374px;
    background: #868686;
}

.navbar {
    flex: 0 0 62px;
    display: flex;
    align-items: center;
    background-color: #3a00ff;
    color: #fff;
}

.brand {
    width: 230px;
    text-align: center;
    font-size: 20px;
}

.burger {
    margin-left: 16px;
    display: flex;
    flex-direction: column;
    gap: 3px;
}

.burger i {
    width: 11px;
    height: 1.500px;
    background: #fff;
}

.nav-info {
    margin-left: 16px;
}

.nav-right {
    flex: 1;
    display: flex;
    align-items: center;
    justify-content: flex-end;
    padding-right: 15px;
}

.nav-btn {
    height: 30px;
    display: flex;
    align-items: center;
    justify-content: center;
    background-color: #05d690;
    margin-right: 16px;
}

.nav-pos {
    width: 62px;
    gap: 6px;
    font-size: 11.500px;
    font-weight: 700;
}

.nav-money {
    width: 42px;
}

.nav-help {
    width: 38px;
}

.nav-date {
    font-size: 14px;
    font-weight: 700;
    margin-right: 22px;
}

.nav-bell {
    margin-right: 30px;
}

.nav-user {
    font-size: 14px;
}

.app-body {
    flex: 1;
    display: flex;
    min-height: 0;
}

/* sidebar */
.sidebar {
    flex: 0 0 230px;
    background: #fff;
    color: #444;
    font-size: 14px;
    overflow: hidden;
}

.side-item {
    height: 40px;
    display: flex;
    align-items: center;
    padding-left: 27px;
    position: relative;
}

.side-ico {
    position: absolute;
    left: 27px;
    top: 50%;
    transform: translateY(-50%);
}

.side-item > span {
    margin-left: 29px;
}

.side-chev {
    margin-left: auto;
    margin-right: 19px;
    color: #444;
}

.side-group {
    background: #f3f3f3;
}

.side-active {
    border-left: 3px solid #2a8bc4;
    color: #222;
    font-weight: 700;
}

.side-active .side-ico {
    left: 24px;
}

.side-active > span {
    margin-left: 26px;
}

.side-active .side-chev {
    color: #222;
}

.side-sub {
    height: 30px;
    display: flex;
    align-items: center;
    position: relative;
    padding-left: 49px;
    color: #8a8a8a;
}

.sub-ico {
    position: absolute;
    left: 20px;
    top: 50%;
    transform: translateY(-50%);
}

.side-sub-on {
    color: #000;
    font-weight: 700;
}

.dollar {
    fill: #fff;
    font-size: 8px;
    font-weight: 700;
}

/* content */
.content {
    flex: 1;
    min-width: 0;
    padding: 0 15px;
    background: #f4f4fc;
    color: #4c5278;
    font-size: 14px;
}

.content-head {
    height: 56px;
    display: flex;
    align-items: baseline;
    padding-top: 14px;
}

.content-head h1 {
    margin: 0;
    padding-left: 1px;
    font-size: 24px;
    font-weight: 400;
    color: #3b2a6b;
}

.content-head small {
    margin-left: 9px;
    font-size: 15px;
    color: #777;
}

.card {
    height: 357px;
    padding: 15px 24px 0;
    background: #fff;
    border-top: 3px solid #2a82b5;
    border-radius: 3px;
    box-shadow: 0 1px 3px rgba(0, 0, 0, .08);
}

.card-top {
    height: 34px;
    display: flex;
    align-items: flex-start;
    justify-content: space-between;
}

.card-top h3 {
    margin: 0;
    padding-top: 4px;
    font-size: 18px;
    font-weight: 400;
    color: #3b2a6b;
}

.btn-add {
    width: 66px;
    height: 34px;
    display: flex;
    align-items: center;
    justify-content: center;
    gap: 3px;
    background-color: #3a00ff;
    border-radius: 3px;
    color: #fff;
    font-size: 14px;
}

.controls {
    height: 30px;
    margin-top: 35px;
    display: flex;
    align-items: center;
}

.show {
    padding-bottom: 2px;
}

.page-size {
    width: 75px;
    height: 30px;
    margin: 0 4px;
    display: flex;
    align-items: center;
    justify-content: space-between;
    padding: 0 7px 0 15px;
    background: #fff;
    border: 1px solid #d2d6de;
    font-size: 12px;
    color: #555;
}

.page-size i {
    border-left: 3px solid transparent;
    border-right: 3px solid transparent;
    border-top: 6px solid #444;
}

.exports {
    width: 517px;
    height: 30px;
    margin-left: 63px;
    display: flex;
    background: #f4f4f4;
    border: 1px solid #ddd;
    border-radius: 3px;
    color: #444;
    font-size: 11.700px;
    white-space: nowrap;
}

.exp {
    display: flex;
    align-items: center;
    gap: 3px;
    padding: 0 10px 2px;
    border-right: 1px solid #ddd;
}

.exp-csv {
    width: 110px;
}

.exp-xls {
    width: 140px;
}

.exp-pdf {
    flex: 1;
    justify-content: flex-end;
    border-right: 0;
}

.search {
    width: 149px;
    height: 30px;
    margin-left: auto;
    margin-right: 15px;
    padding: 0 10px;
    border: 1px solid #d2d6de;
    font-family: inherit;
    font-size: 11.500px;
}

.search::placeholder {
    color: #999;
}

.users {
    width: 1049px;
    margin-top: 25px;
    border-collapse: collapse;
    table-layout: fixed;
}

.users th,
.users td {
    border: 1px solid #f1f1f4;
    padding: 0 8px 3px;
    text-align: left;
}

.users th {
    position: relative;
    height: 38.500px;
    padding-bottom: 1px;
    border-bottom: 3px solid #f1f1f4;
    font-weight: 700;
}

.users th svg {
    position: absolute;
    right: 7px;
    top: 12px;
}

.col-user { width: 160px; }
.col-name { width: 178px; }
.col-role { width: 105px; }
.col-mail { width: 295px; }

.users td {
    height: 39.500px;
}

.users .actions {
    padding-bottom: 0;
}

.odd {
    background: #f9f9f9;
}

.act {
    height: 22px;
    display: inline-flex;
    align-items: center;
    gap: 3px;
    padding: 0 6px;
    margin-right: 8px;
    border-radius: 3px;
    color: #fff;
    font-size: 12px;
    vertical-align: middle;
}

.act-edit { background-color: #3a00ff; }
.act-view { background-color: #00cff4; }
.act-del { background-color: #ff0050; }

.info {
    margin-top: 13px;
    line-height: 20px;
}

.pager {
    width: 167px;
    height: 34px;
    margin: 2px 0 0 auto;
    display: flex;
    border: 1px solid #ddd;
    border-radius: 4px;
    color: #777;
}

.pg {
    display: flex;
    align-items: center;
    justify-content: center;
    flex: 0 0 auto;
    padding: 0 12px;
}

.pg-on {
    width: 34px;
    margin: -1px 0;
    padding: 0;
    background-color: #2a6fb5;
    color: #d9e6f3;
}

/* dock */
.dock {
    flex: 0 0 53px;
    display: flex;
    align-items: center;
    padding-left: 2px;
    background: #3f2b30;
}

.dock-item {
    position: relative;
    width: 50px;
    height: 50px;
    margin-right: 4px;
    display: flex;
    align-items: center;
    justify-content: center;
}

.dock-active {
    background: #63525a;
    border-radius: 3px;
}

.dock-dot {
    position: absolute;
    left: 23px;
    bottom: -1px;
    width: 4px;
    height: 4px;
    border-radius: 50%;
    background: #e9602c;
}

.dock-grid {
    margin-left: auto;
    margin-right: 16px;
    display: grid;
    grid-template-columns: repeat(3, 4px);
    gap: 5px;
}

.dock-grid i {
    height: 4px;
    border-radius: 50%;
    background: #f2f0ee;
}

/* save password bubble */
.pw-bubble {
    position: absolute;
    left: 636px;
    top: 122px;
    width: 321px;
    height: 292px;
    display: flex;
    flex-direction: column;
    background: #fff;
    border: 1px solid #d0d0d0;
    border-radius: 2px;
    box-shadow: 0 2px 5px rgba(0, 0, 0, .35);
    color: #3c4043;
    font-family: "Noto Sans", sans-serif;
    font-size: 14.300px;
}

.pw-close {
    position: absolute;
    right: 9px;
    top: -2px;
    font-size: 24px;
    line-height: 26px;
    color: #5f6368;
}

.pw-main {
    flex: 0 0 192px;
    padding: 15px 16px 0 15px;
}

.pw-title {
    height: 33px;
    font-size: 17.500px;
    line-height: 24px;
    color: #2a2c30;
}

.pw-row {
    height: 33px;
    margin-bottom: 13px;
    display: flex;
    align-items: center;
}

.pw-row-pass {
    height: 34px;
    margin-bottom: 16px;
}

.pw-row label {
    width: 85px;
    padding-bottom: 2px;
}

.pw-field {
    flex: 1;
    height: 100%;
    position: relative;
    display: flex;
    align-items: center;
    padding-left: 7px;
    padding-bottom: 1px;
    border: 1px solid #dadce0;
    border-radius: 3px;
    font-size: 14.400px;
}

.pw-field i {
    position: absolute;
    right: 8px;
    top: 14px;
    border-left: 4px solid transparent;
    border-right: 4px solid transparent;
    border-top: 4px solid #222;
}

.pw-mono {
    font-family: "DejaVu Sans Mono", monospace;
    font-size: 14.700px;
}

.pw-eye {
    width: 26px;
    height: 36px;
    margin-left: 15px;
    display: flex;
    align-items: center;
    justify-content: center;
    border: 2px solid #b7cdf6;
    border-radius: 3px;
}

.pw-actions {
    display: flex;
    justify-content: flex-end;
    gap: 8px;
}

.pw-btn {
    width: 75px;
    height: 32px;
    display: flex;
    align-items: center;
    justify-content: center;
    border: 1px solid #dadce0;
    border-radius: 3px;
    color: #2b5ce6;
    font-size: 14.500px;
    font-weight: 600;
}

.pw-save {
    background-color: #2357e6;
    border-color: #2357e6;
    color: #fff;
}

.pw-foot {
    flex: 1;
    padding: 16px 16px 0 15px;
    background: #f8f9fa;
    border-top: 1px solid #e6e6e6;
    line-height: 22px;
}
```
